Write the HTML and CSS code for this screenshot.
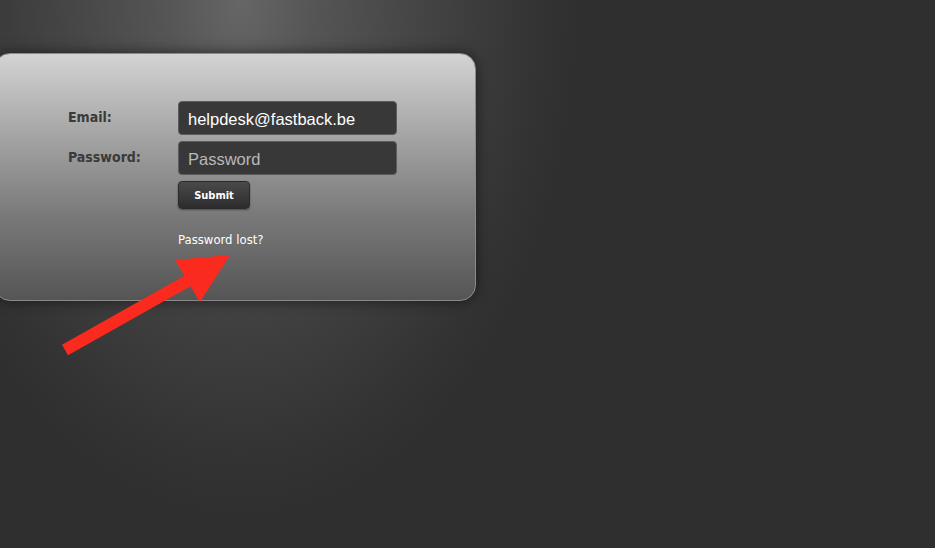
FILE: index.html
```html
<!DOCTYPE html>
<html lang="en">
<head>
  <meta charset="UTF-8" />
  <title>Login</title>
  <meta name="viewport" content="width=device-width, initial-scale=1.0">
  <link rel="stylesheet" href="styles.css">
</head>
<body>

  <div class="login-box">
    <form class="login-form">
      <label class="field-label" for="email">Email:</label>
      <input class="field" type="text" id="email" value="helpdesk@fastback.be">

      <label class="field-label" for="password">Password:</label>
      <input class="field" type="password" id="password" placeholder="Password">

      <span></span>
      <div><button type="button" class="submit-btn">Submit</button></div>

      <span></span>
      <a class="lost-link" href="#">Password lost?</a>
    </form>
  </div>

  <svg class="arrow" width="935" height="548" viewBox="0 0 935 548">
    <polygon fill="#fb2a1e" points="62,344.8 184.5,275.8 175,260 230,255 200,302 190.5,286.2 68,355.2" />
  </svg>

</body>
</html>
```

FILE: styles.css
```css
html, body {
  height: 100%;
}
body {
  margin: 0;
  overflow: hidden;
  font-family: 'DejaVu Sans Condensed', 'DejaVu Sans', sans-serif;
  background-color: #2f2f2f;
  background-image: radial-gradient(ellipse 340px 520px at 240px 0, #666 0%, #555 22%, #474747 48%, #3b3b3b 72%, #333 88%, #2f2f2f 100%);
}
.login-box {
  margin: 53px 0 0 -6px;
  width: 482px;
  height: 248px;
  box-sizing: border-box;
  border: 1px solid #8a8a8a;
  border-radius: 16px;
  background: linear-gradient(to bottom, #d3d3d3 0%, #a9a9a9 30%, #7a7a7a 65%, #555 100%);
  box-shadow: 0 0 14px rgba(0,0,0,0.55);
  padding: 47px 0 0 73px;
}
.login-form {
  display: grid;
  grid-template-columns: 110px 219px;
  row-gap: 6px;
  align-items: start;
}
.field-label {
  font-weight: bold;
  font-size: 14px;
  color: #3a3a3a;
  padding-top: 8px;
}
.field {
  width: 219px;
  height: 34px;
  box-sizing: border-box;
  background: #383838;
  border: 1px solid #5c5c5c;
  border-radius: 4px;
  color: #fff;
  font-family: 'Liberation Sans', Arial, sans-serif;
  font-size: 16.5px;
  padding: 2px 9px 0;
  outline: none;
}
.field::placeholder {
  color: #b9b9b9;
}
.submit-btn {
  width: 72px;
  height: 28px;
  border: 1px solid #2a2a2a;
  border-radius: 4px;
  background: linear-gradient(to bottom, #4a4a4a, #2c2c2c);
  color: #fff;
  font-family: 'DejaVu Sans Condensed', 'DejaVu Sans', sans-serif;
  font-weight: bold;
  font-size: 11px;
  box-shadow: 0 1px 2px rgba(0,0,0,0.4);
}
.lost-link {
  margin-top: 17px;
  color: #fff;
  font-size: 13px;
  text-decoration: none;
}
.arrow {
  position: absolute;
  left: 0;
  top: 0;
  pointer-events: none;
}
```
